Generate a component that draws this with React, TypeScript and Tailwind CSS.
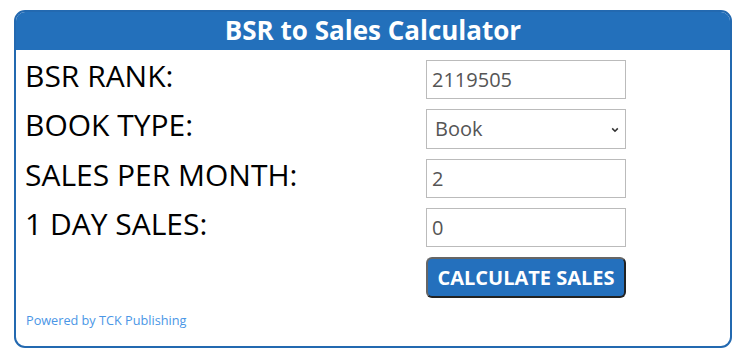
import React from "react";

const rows = [
  { label: "BSR RANK:", value: "2119505" },
  { label: "BOOK TYPE:", select: true },
  { label: "SALES PER MONTH:", value: "2" },
  { label: "1 DAY SALES:", value: "0" },
];

export default function App() {
  return (
    <div className="h-[360px] w-[741px] bg-white pl-[14px] pt-[10px] font-['Open_Sans',sans-serif]">
      <div className="flex h-[338px] w-[718px] flex-col overflow-hidden rounded-[11px] border-2 border-[#2369b0]">
        {/* Header */}
        <div className="flex h-[38px] items-center justify-center bg-[#2370bb] pb-[1px] text-[26px] font-bold text-white">
          BSR to Sales Calculator
        </div>

        {/* Form */}
        <div className="flex flex-col gap-[10px] pt-[10px]">
          {rows.map((r) => (
            <div key={r.label} className="flex items-start">
              <div className="w-[410px] pl-[9px] text-[30px] leading-[31px] text-black">
                {r.label}
              </div>
              {r.select ? (
                <div className="relative flex h-[40px] w-[200px] items-center border border-[#bbbbbb] bg-white pl-[8px] text-[20px] text-[#555]">
                  Book
                  <svg
                    viewBox="0 0 10 10"
                    className="absolute right-[6px] top-[16px] h-[8px] w-[8px]"
                    fill="none"
                    stroke="#333"
                    strokeWidth="2"
                  >
                    <path d="M1.5 3 L5 6.5 L8.5 3" />
                  </svg>
                </div>
              ) : (
                <input
                  readOnly
                  value={r.value}
                  className="h-[39px] w-[200px] border border-[#bbbbbb] px-[5px] text-[20px] text-[#555] outline-none"
                />
              )}
            </div>
          ))}

          <div className="flex pl-[410px]">
            <button className="h-[41px] w-[200px] rounded-[6px] border-2 border-t-[#666] border-l-[#666] border-b-[#222] border-r-[#222] bg-[#2470bd] text-[20px] font-bold text-white">
              CALCULATE SALES
            </button>
          </div>
        </div>

        <div className="mt-auto pb-[16px] pl-[10px] text-[12.7px] text-[#4a96e6]">
          Powered by TCK Publishing
        </div>
      </div>
    </div>
  );
}
